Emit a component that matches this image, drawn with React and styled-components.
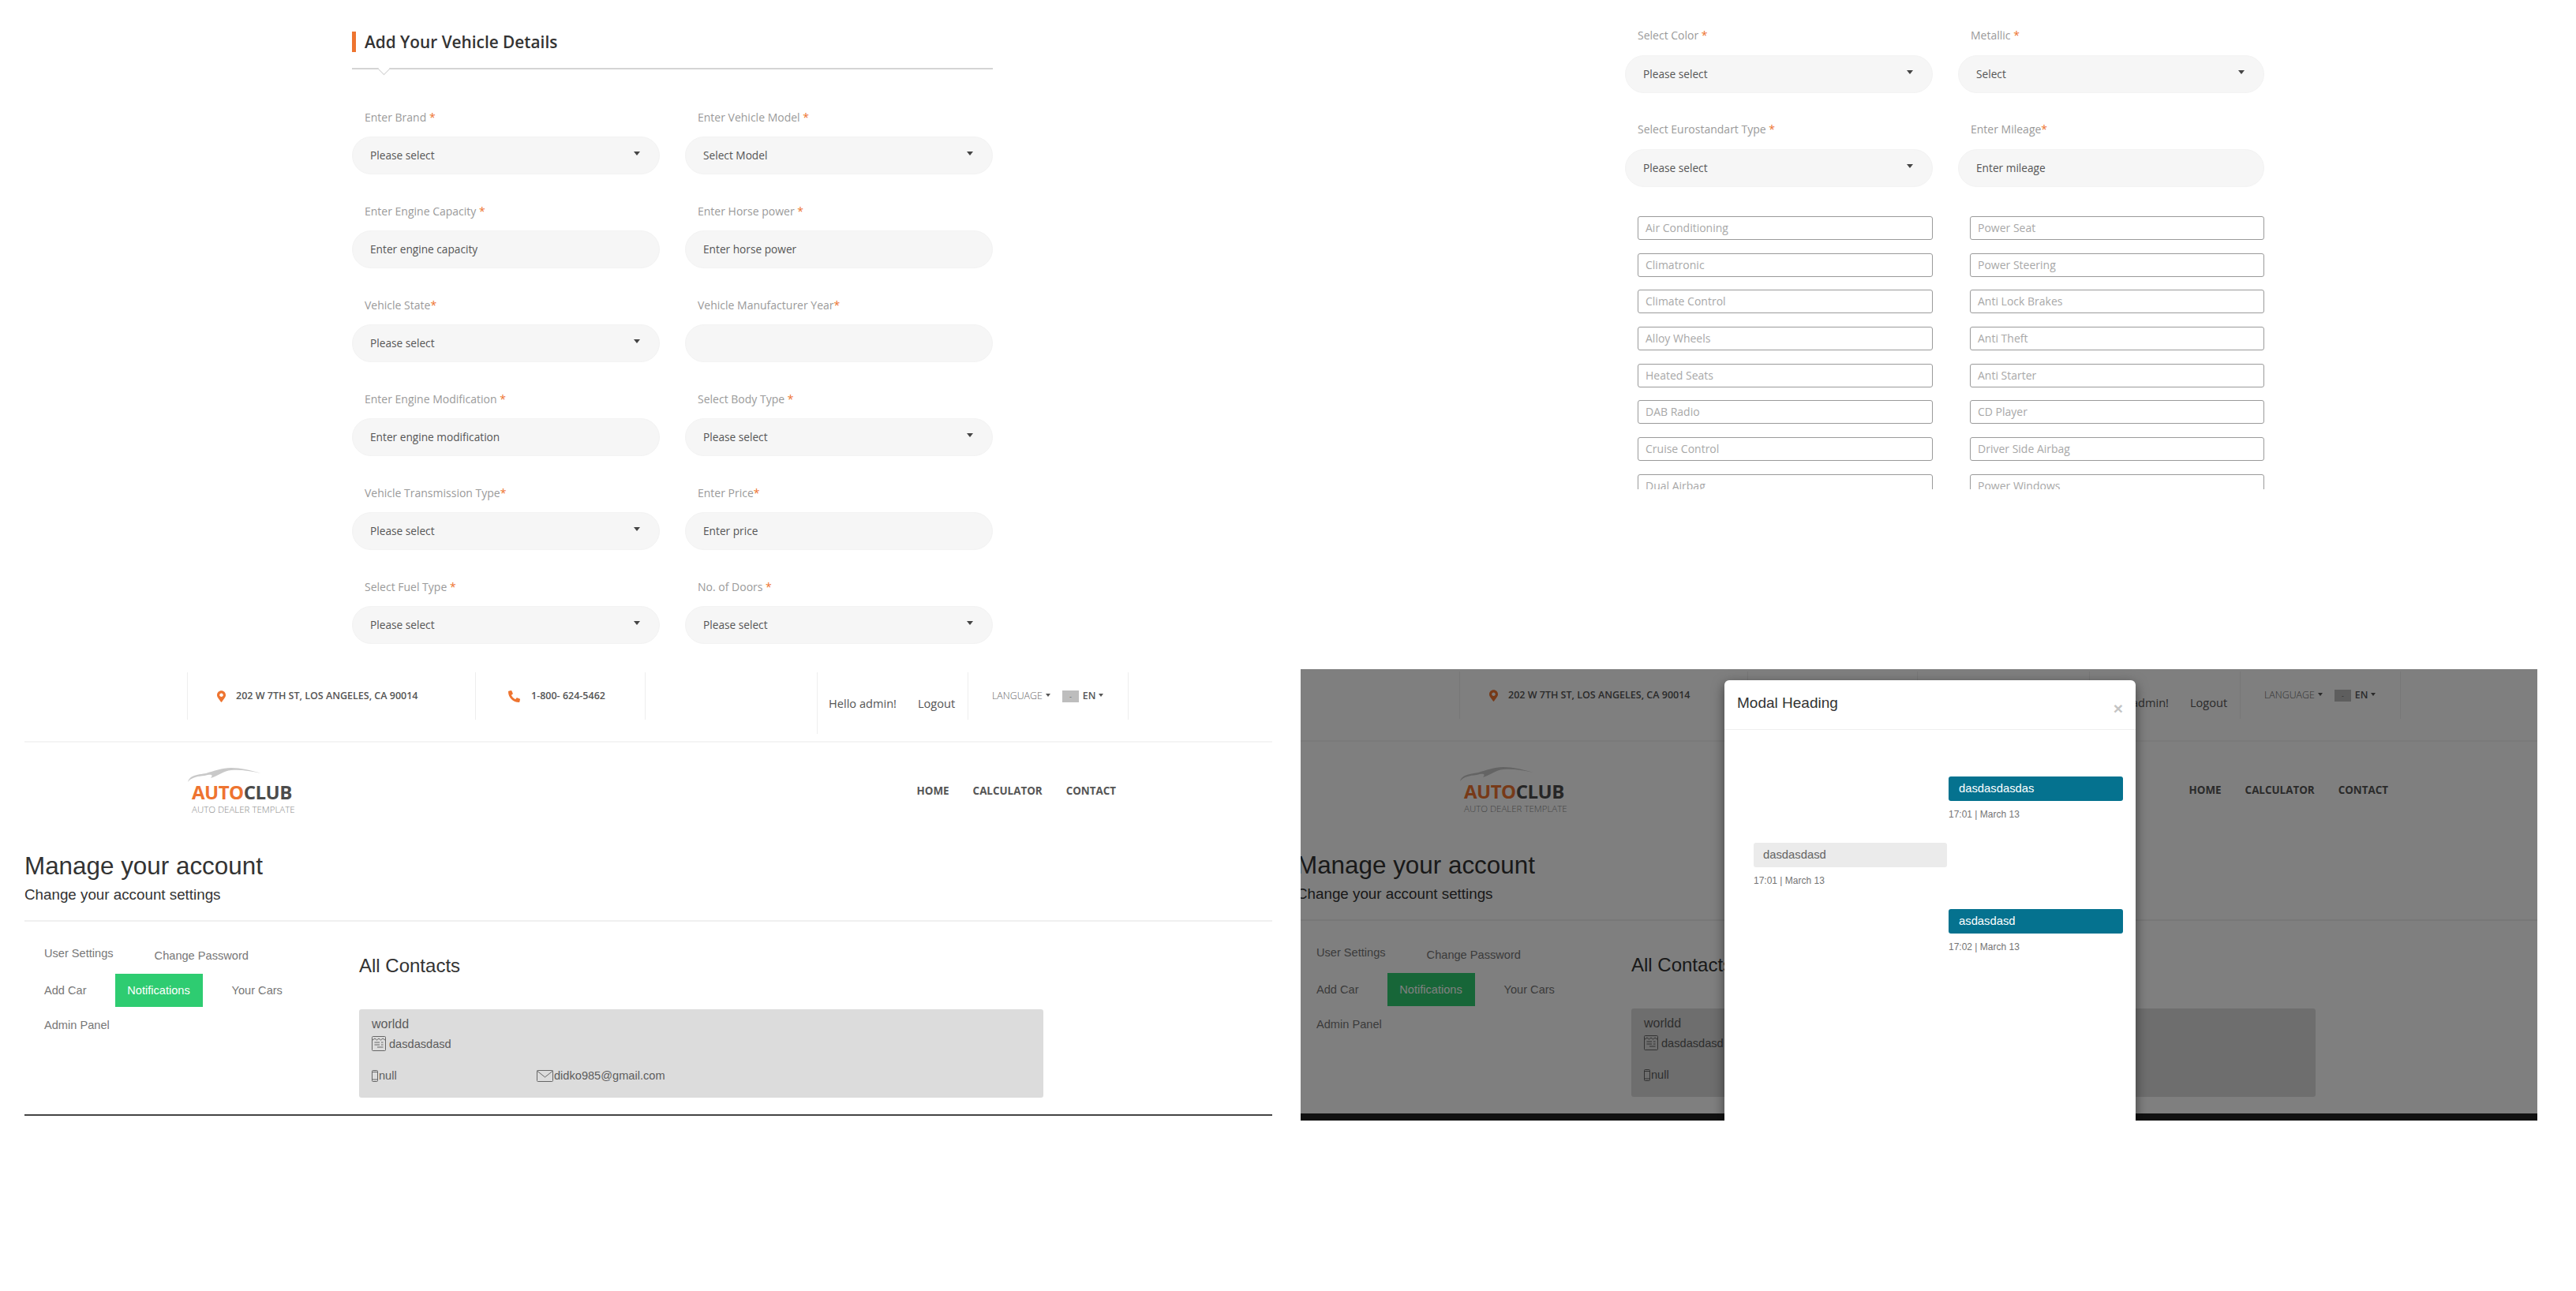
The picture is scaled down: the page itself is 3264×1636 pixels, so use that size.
import React from 'react'
import styled, { createGlobalStyle } from 'styled-components'
import { FaMapMarkerAlt, FaPhoneAlt } from 'react-icons/fa'

const orange = '#ee7430'
const openSans = '"Open Sans", "Liberation Sans", sans-serif'
const arial = '"Liberation Sans", Arial, sans-serif'

const GlobalStyle = createGlobalStyle`
  html, body { margin: 0; padding: 0; background: #fff; }
  * { box-sizing: border-box; }
`

const Screen = styled.div`
  width: 3264px;
  height: 1636px;
  overflow: hidden;
  background: #fff;
`
const TopRow = styled.div`
  display: flex;
  height: 848px;
`
const BottomRow = styled.div`
  display: flex;
  height: 572px;
`

/* vehicle form */
const FormPanel = styled.section`
  width: ${p => p.$width}px;
  padding-left: ${p => p.$left}px;
  padding-top: ${p => p.$top}px;
`
const FormColumn = styled.div`
  width: 812px;
`
const Heading = styled.h2`
  margin: 0;
  height: 26px;
  padding-left: 11px;
  border-left: 5px solid ${orange};
  font: 600 20.8px/26px ${openSans};
  color: #333;
`
const Divider = styled.div`
  position: relative;
  margin: 20px 0 50px;
  height: 2px;
  background: #d4d4d4;
  &::after {
    content: '';
    position: absolute;
    left: 35px;
    top: -4px;
    width: 10px;
    height: 10px;
    background: #fff;
    border-right: 1px solid #d4d4d4;
    border-bottom: 1px solid #d4d4d4;
    transform: rotate(45deg);
  }
`
const FieldGrid = styled.div`
  display: grid;
  grid-template-columns: ${p => p.$cols || '390px 390px'};
  column-gap: 32px;
`
const FieldWrap = styled.div`
  height: 119px;
`
const Label = styled.div`
  padding: ${p => p.$drop || 0}px 0 0 16px;
  font: 400 14px/20px ${openSans};
  color: #9a9a9a;
  margin-bottom: ${p => 15 - (p.$drop || 0)}px;
  span { color: ${orange}; }
`
const Pill = styled.div`
  position: relative;
  height: 48px;
  border-radius: 24px;
  background: #f6f6f6;
  border: 1px solid #f3f3f3;
  padding-left: 22px;
  font: 400 13.7px/46px ${openSans};
  color: #555;
`
const SelectArrow = styled.i`
  position: absolute;
  right: 24px;
  top: 18px;
  width: 0;
  height: 0;
  border-left: 4.5px solid transparent;
  border-right: 4.5px solid transparent;
  border-top: 5px solid #444;
`
const OptionList = styled.div`
  display: grid;
  grid-template-columns: 374px 373px;
  column-gap: 47px;
  row-gap: 16.7px;
  margin: 1px 0 0 16px;
  height: 346px;
  overflow: hidden;
`
const OptionBox = styled.div`
  height: 30px;
  border: 1px solid #9a9a9a;
  border-radius: 3px;
  padding-left: 9px;
  font: 400 14px/28px ${openSans};
  color: #a8a8a8;
`

/* account page */
const Page = styled.div`
  width: 1612px;
  flex-shrink: 0;
  padding-left: 31px;
  margin: ${p => (p.$dimmed ? '-1px 0 0 -36px' : '0')};
`
const TopBar = styled.div`
  display: flex;
  align-items: flex-start;
  height: 93px;
  padding: 4px 0 0 206px;
  border-bottom: 2px solid #f4f4f4;
`
const BarCell = styled.div`
  display: flex;
  align-items: center;
  flex-shrink: 0;
  width: ${p => p.$w}px;
  height: ${p => p.$h || 60}px;
  padding-left: ${p => p.$pad || 0}px;
  border-left: 1px solid #eee;
  border-right: ${p => (p.$end ? '1px solid #eee' : '0')};
`
const BarText = styled.span`
  font: 600 12.5px/16px ${openSans};
  color: #555;
  white-space: nowrap;
  margin-left: ${p => p.$gap}px;
`
const PinIcon = styled(FaMapMarkerAlt)`
  width: 11px;
  height: 15px;
  color: ${orange};
`
const PhoneIcon = styled(FaPhoneAlt)`
  width: 15px;
  height: 15px;
  color: ${orange};
`
const UserLink = styled.a`
  font: 400 14.6px/20px ${openSans};
  color: #555;
  white-space: nowrap;
  margin-right: 27px;
`
const LangLabel = styled.span`
  font: 300 12.4px/16px ${openSans};
  color: #666;
`
const Caret = styled.i`
  display: inline-block;
  width: 0;
  height: 0;
  margin: 0 ${p => p.$after || 0}px 3px 4px;
  border-left: 3.5px solid transparent;
  border-right: 3.5px solid transparent;
  border-top: 4px solid #555;
`
const Flag = styled.span`
  width: 21px;
  height: 15px;
  margin-right: 5px;
  background: #bdbdbd;
  color: #666;
  font: 400 9px/15px ${openSans};
  text-align: center;
`
const LangValue = styled.span`
  font: 600 12.4px/16px ${openSans};
  color: #555;
`
const BrandRow = styled.div`
  display: flex;
  align-items: center;
  justify-content: space-between;
  width: 1177px;
  height: 122px;
  margin-left: 206px;
`
const Logo = styled.div`
  display: flex;
  flex-direction: column;
  width: 140px;
`
const LogoCar = styled.svg`
  display: block;
  width: 100px;
  height: 20px;
`
const LogoName = styled.div`
  padding-left: 6px;
  font: 700 24px/24px ${openSans};
  letter-spacing: -0.5px;
  color: ${orange};
  span { color: #4c4c4c; }
`
const LogoTag = styled.div`
  margin-top: 3px;
  padding-left: 6px;
  font: 300 11.5px/14px ${openSans};
  color: #888;
  white-space: nowrap;
`
const Nav = styled.nav`
  display: flex;
  gap: 30px;
`
const NavItem = styled.a`
  font: 700 13.4px/18px ${openSans};
  color: #555;
`
const TitleBlock = styled.div`
  padding: 17px 0 20px;
  border-bottom: 2px solid #f0f0f0;
  font-family: ${arial};
`
const PageTitle = styled.h1`
  margin: 0;
  font-size: 31.4px;
  font-weight: 400;
  line-height: 36px;
  color: #333;
`
const PageSub = styled.p`
  margin: 6px 0 0;
  font-size: 18.8px;
  line-height: 24px;
  color: #333;
`
const Workspace = styled.div`
  display: flex;
  height: 244px;
  font-family: ${arial};
`
const Sidebar = styled.div`
  width: 424px;
  padding: 30px 0 0 25px;
`
const TabRow = styled.div`
  display: flex;
  align-items: ${p => (p.$top ? 'flex-start' : 'center')};
  margin-bottom: 13px;
`
const Tab = styled.a`
  font-size: 14.6px;
  line-height: 20px;
  color: ${p => (p.$active ? '#fff' : '#777')};
  margin-left: ${p => p.$gap || 0}px;
  margin-top: ${p => p.$drop || 0}px;
  ${p => p.$active && `
    display: block;
    width: 111px;
    height: 42px;
    line-height: 42px;
    text-align: center;
    background: #2ecc71;
  `}
`
const Contacts = styled.div`
  padding-top: 41px;
`
const ContactsTitle = styled.h3`
  margin: 0 0 40px;
  font-size: 24px;
  font-weight: 400;
  line-height: 30px;
  color: #333;
`
const ContactCard = styled.div`
  width: 867px;
  height: 112px;
  padding: 9px 16px 0;
  background: #dcdcdc;
  border-radius: 3px;
  color: #5c5c5c;
`
const ContactName = styled.div`
  font-size: 16px;
  line-height: 20px;
`
const ContactLine = styled.div`
  display: flex;
  align-items: center;
  margin-top: ${p => p.$top}px;
  font-size: 14.6px;
  line-height: 18px;
`
const ContactCell = styled.div`
  display: flex;
  align-items: center;
  width: ${p => p.$w}px;
`
const LineIcon = styled.svg`
  display: block;
  flex-shrink: 0;
  fill: none;
  stroke: #666;
  stroke-width: 1;
  margin-right: ${p => p.$gap || 0}px;
`
const PageEnd = styled.div`
  width: 1581px;
  height: ${p => (p.$dimmed ? '12px' : '2px')};
  background: ${p => (p.$dimmed ? '#222' : '#444')};
`

/* dimmed copy with modal */
const ModalShot = styled.section`
  position: relative;
  display: flex;
  align-items: flex-start;
  width: 1567px;
  height: 572px;
  overflow: hidden;
  margin-left: 36px;
`
const Backdrop = styled.div`
  position: absolute;
  inset: 0;
  background: rgba(0, 0, 0, 0.5);
`
const Modal = styled.div`
  position: absolute;
  left: 537px;
  top: 14px;
  width: 521px;
  height: 600px;
  background: #fff;
  border-radius: 6px 6px 0 0;
  box-shadow: 0 5px 15px rgba(0, 0, 0, 0.5);
  font-family: ${arial};
`
const ModalHeader = styled.div`
  display: flex;
  justify-content: space-between;
  height: 63px;
  padding: 17px 16px 0;
  border-bottom: 1px solid #eee;
`
const ModalTitle = styled.h4`
  margin: 0;
  font-size: 19px;
  font-weight: 400;
  line-height: 24px;
  color: #333;
`
const ModalClose = styled.span`
  font-size: 21px;
  font-weight: 700;
  line-height: 22px;
  margin-top: 8px;
  color: #c4c4c4;
`
const ModalBody = styled.div`
  padding: 59px 16px 0 37px;
`
const Message = styled.div`
  width: ${p => (p.$out ? '221px' : '245px')};
  margin: 0 0 28px ${p => (p.$out ? '247px' : '0')};
`
const Bubble = styled.div`
  height: 31px;
  padding-left: ${p => (p.$out ? '13px' : '12px')};
  border-radius: 3px;
  font-size: 14.8px;
  line-height: 31px;
  background: ${p => (p.$out ? '#05728f' : '#ebebeb')};
  color: ${p => (p.$out ? '#fff' : '#646464')};
`
const MessageTime = styled.div`
  margin-top: 9px;
  font-size: 12px;
  line-height: 16px;
  color: #747474;
`

const leftFields = [
  ['Enter Brand', ' *', 'Please select', true],
  ['Enter Vehicle Model', ' *', 'Select Model', true],
  ['Enter Engine Capacity', ' *', 'Enter engine capacity'],
  ['Enter Horse power', ' *', 'Enter horse power'],
  ['Vehicle State', '*', 'Please select', true],
  ['Vehicle Manufacturer Year', '*', ''],
  ['Enter Engine Modification', ' *', 'Enter engine modification'],
  ['Select Body Type', ' *', 'Please select', true],
  ['Vehicle Transmission Type', '*', 'Please select', true],
  ['Enter Price', '*', 'Enter price'],
  ['Select Fuel Type', ' *', 'Please select', true],
  ['No. of Doors', ' *', 'Please select', true],
]
const rightFields = [
  ['Select Color', ' *', 'Please select', true],
  ['Metallic', ' *', 'Select', true],
  ['Select Eurostandart Type', ' *', 'Please select', true],
  ['Enter Mileage', '*', 'Enter mileage'],
]
const options = [
  'Air Conditioning', 'Power Seat', 'Climatronic', 'Power Steering',
  'Climate Control', 'Anti Lock Brakes', 'Alloy Wheels', 'Anti Theft',
  'Heated Seats', 'Anti Starter', 'DAB Radio', 'CD Player',
  'Cruise Control', 'Driver Side Airbag', 'Dual Airbag', 'Power Windows',
]

function Field({ label, mark, value, select, drop }) {
  return (
    <FieldWrap>
      <Label $drop={drop}>{label}<span>{mark}</span></Label>
      <Pill>{value}{select && <SelectArrow />}</Pill>
    </FieldWrap>
  )
}

function AccountPage({ dimmed }) {
  return (
    <Page $dimmed={dimmed}>
      <TopBar>
        <BarCell $w={365} $pad={37}>
          <PinIcon />
          <BarText $gap={13}>202 W 7TH ST, LOS ANGELES, CA 90014</BarText>
        </BarCell>
        <BarCell $w={215} $pad={41}>
          <PhoneIcon />
          <BarText $gap={14}>1-800- 624-5462</BarText>
        </BarCell>
        <BarCell $w={218} />
        <BarCell $w={191} $h={78} $pad={14}>
          <UserLink>Hello admin!</UserLink>
          <UserLink>Logout</UserLink>
        </BarCell>
        <BarCell $w={204} $pad={30} $end>
          <LangLabel>LANGUAGE</LangLabel>
          <Caret $after={15} />
          <Flag>-</Flag>
          <LangValue>EN</LangValue>
          <Caret />
        </BarCell>
      </TopBar>
      <BrandRow>
        <Logo>
          <LogoCar viewBox="0 0 100 20">
            <path d="M1 19C3 11 12 10 24 8C34 5 44 1 56 1C68 1 80 4 94 8C80 5 68 3 56 4C46 5 40 11 30 14C34 9 30 9 22 11C13 12 6 13 1 19Z" fill="#c9c9c9" />
          </LogoCar>
          <LogoName>AUTO<span>CLUB</span></LogoName>
          <LogoTag>AUTO DEALER TEMPLATE</LogoTag>
        </Logo>
        <Nav>
          <NavItem>HOME</NavItem>
          <NavItem>CALCULATOR</NavItem>
          <NavItem>CONTACT</NavItem>
        </Nav>
      </BrandRow>
      <TitleBlock>
        <PageTitle>Manage your account</PageTitle>
        <PageSub>Change your account settings</PageSub>
      </TitleBlock>
      <Workspace>
        <Sidebar>
          <TabRow $top>
            <Tab>User Settings</Tab>
            <Tab $gap={52} $drop={3}>Change Password</Tab>
          </TabRow>
          <TabRow>
            <Tab>Add Car</Tab>
            <Tab $gap={36} $active>Notifications</Tab>
            <Tab $gap={37}>Your Cars</Tab>
          </TabRow>
          <TabRow>
            <Tab>Admin Panel</Tab>
          </TabRow>
        </Sidebar>
        <Contacts>
          <ContactsTitle>All Contacts</ContactsTitle>
          <ContactCard>
            <ContactName>worldd</ContactName>
            <ContactLine $top={5}>
              <LineIcon $gap={4} width="18" height="19" viewBox="0 0 18 19">
                <rect x="0.5" y="0.5" width="17" height="18" rx="1" />
                <path d="M1 5L4 3L6.5 5L9 3L11.5 5L14 3L17 5M3.5 8H10M12 8H14.5M3.5 11H10M12 11H14.5M7 14H14.5" />
              </LineIcon>
              dasdasdasd
            </ContactLine>
            <ContactLine $top={22}>
              <ContactCell $w={209}>
                <LineIcon $gap={1} width="8" height="15" viewBox="0 0 8 15">
                  <rect x="0.5" y="0.5" width="7" height="14" rx="1" />
                  <path d="M0.5 2.5H7.5M0.5 12H7.5" />
                </LineIcon>
                null
              </ContactCell>
              <ContactCell $w={300}>
                <LineIcon $gap={1} width="21" height="15" viewBox="0 0 21 15">
                  <rect x="0.5" y="0.5" width="20" height="14" rx="1" />
                  <path d="M0.5 1L10.5 9L20.5 1" />
                </LineIcon>
                didko985@gmail.com
              </ContactCell>
            </ContactLine>
          </ContactCard>
        </Contacts>
      </Workspace>
      <PageEnd $dimmed={dimmed} />
    </Page>
  )
}

export default function App() {
  return (
    <Screen>
      <GlobalStyle />
      <TopRow>
        <FormPanel $width={2059} $left={446} $top={40}>
          <FormColumn>
            <Heading>Add Your Vehicle Details</Heading>
            <Divider />
            <FieldGrid>
              {leftFields.map(f => (
                <Field key={f[0]} label={f[0]} mark={f[1]} value={f[2]} select={f[3]} drop={1} />
              ))}
            </FieldGrid>
          </FormColumn>
        </FormPanel>
        <FormPanel $width={810} $left={0} $top={35}>
          <FieldGrid $cols="390px 388px">
            {rightFields.map(f => (
              <Field key={f[0]} label={f[0]} mark={f[1]} value={f[2]} select={f[3]} />
            ))}
          </FieldGrid>
          <OptionList>
            {options.map(o => <OptionBox key={o}>{o}</OptionBox>)}
          </OptionList>
        </FormPanel>
      </TopRow>
      <BottomRow>
        <AccountPage />
        <ModalShot>
          <AccountPage dimmed />
          <Backdrop />
          <Modal>
            <ModalHeader>
              <ModalTitle>Modal Heading</ModalTitle>
              <ModalClose>×</ModalClose>
            </ModalHeader>
            <ModalBody>
              <Message $out>
                <Bubble $out>dasdasdasdas</Bubble>
                <MessageTime>17:01 | March 13</MessageTime>
              </Message>
              <Message>
                <Bubble>dasdasdasd</Bubble>
                <MessageTime>17:01 | March 13</MessageTime>
              </Message>
              <Message $out>
                <Bubble $out>asdasdasd</Bubble>
                <MessageTime>17:02 | March 13</MessageTime>
              </Message>
            </ModalBody>
          </Modal>
        </ModalShot>
      </BottomRow>
    </Screen>
  )
}
